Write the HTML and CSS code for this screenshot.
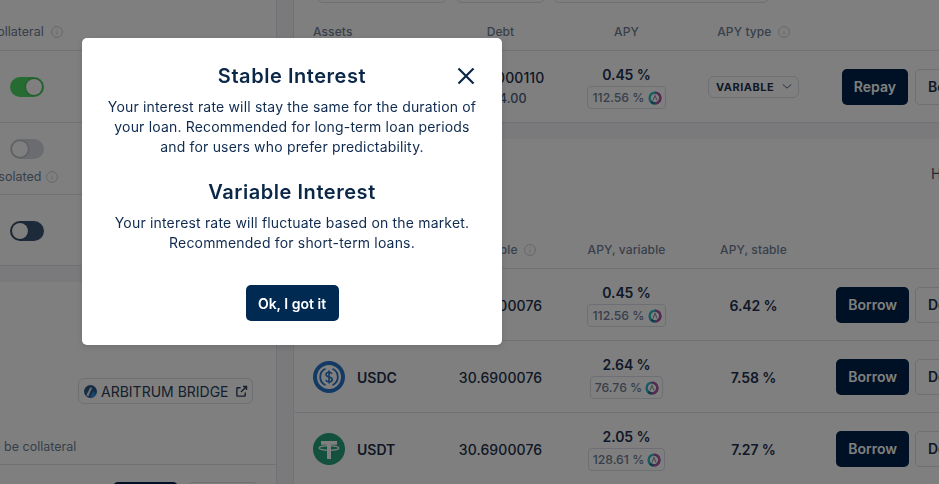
FILE: index.html
```html
<!DOCTYPE html>
<html lang="en">
<head>
    <meta charset="UTF-8">
    <title>Stable Interest</title>
    <link rel="stylesheet" href="styles.css">
</head>
<body>

<svg class="defs" width="0" height="0">
    <symbol id="info" viewBox="0 0 12 12">
        <circle cx="6" cy="6" r="5.4" fill="none" stroke="currentColor"/>
        <path d="M6 5.4v3M6 3.4v.8" fill="none" stroke="currentColor"/>
    </symbol>
    <symbol id="reward" viewBox="0 0 14 14">
        <circle cx="7" cy="7" r="5.4" fill="none" stroke="#2eb8c4" stroke-width="2.4"/>
        <path d="M7 1.6a5.4 5.4 0 0 1 0 10.8" fill="none" stroke="#b6509e" stroke-width="2.4"/>
        <path d="M7 12.4a5.4 5.4 0 0 1-4-1.8" fill="none" stroke="#1f7a9c" stroke-width="2.4"/>
        <path d="M5 9.4 7 4.4l2 5" fill="none" stroke="#8a93a3" stroke-width="1.1"/>
    </symbol>
</svg>

<div class="page">

    <!-- Левая колонка -->
    <div class="side">
        <div class="card side-top">
            <div class="side-head">
                <span>Collateral</span>
                <svg class="info"><use href="#info"/></svg>
            </div>
            <div class="side-row"><span class="toggle toggle-on"></span></div>
            <div class="side-row side-row-iso">
                <span class="toggle toggle-off"></span>
                <div class="side-note">
                    <span>Isolated</span>
                    <svg class="info"><use href="#info"/></svg>
                </div>
            </div>
            <div class="side-row"><span class="toggle toggle-dark"></span></div>
        </div>

        <div class="card side-bottom">
            <a class="bridge">
                <svg class="bridge-logo" viewBox="0 0 14 14">
                    <circle cx="7" cy="7" r="7" fill="#2b5a8a"/>
                    <path d="M2.500 11 6.600 3h2.200L4.600 12.400z" fill="#dfe4ea"/>
                    <path d="M6.500 13 10 6.400l3 3.600-3 3.200z" fill="#2d8ae0"/>
                </svg>
                ARBITRUM BRIDGE
                <svg class="ext" viewBox="0 0 14 14">
                    <path d="M11 8v3.200a.8.8 0 0 1-.8.8H2.800a.8.8 0 0 1-.8-.8V3.800a.8.8 0 0 1 .8-.8H6M8.600 1.600h3.800v3.800M12.200 1.800 6.400 7.600" fill="none" stroke="currentColor" stroke-width="1.500"/>
                </svg>
            </a>
            <div class="side-caption">Can be collateral</div>
            <div class="side-btns">
                <button class="btn btn-dark side-btn">Supply</button>
                <button class="btn btn-line side-btn-line">Details</button>
            </div>
        </div>
    </div>

    <!-- Правая колонка -->
    <div class="main">
        <div class="card positions">
            <div class="pills">
                <span class="pill pill-a"></span>
                <span class="pill pill-b"></span>
                <span class="pill pill-c"></span>
            </div>
            <div class="grid grid-head">
                <span class="col-asset">Assets</span>
                <span>Debt</span>
                <span>APY</span>
                <span>APY type <svg class="info"><use href="#info"/></svg></span>
            </div>
            <div class="grid grid-row">
                <span class="asset"></span>
                <div class="amount">
                    <span>30.69000110</span>
                    <small>$ 124.00</small>
                </div>
                <div class="apy">
                    <strong>0.45 %</strong>
                    <span class="badge">112.56 % <svg class="reward"><use href="#reward"/></svg></span>
                </div>
                <div class="type">
                    <span class="select">VARIABLE
                        <svg class="chevron" viewBox="0 0 12 8"><path d="M1 1.500 6 6l5-4.500" fill="none" stroke="currentColor" stroke-width="1.200"/></svg>
                    </span>
                </div>
                <div class="actions">
                    <button class="btn btn-dark">Repay</button>
                    <button class="btn btn-line">Borrow</button>
                </div>
            </div>
        </div>

        <div class="card borrow">
            <div class="borrow-top">Hide assets with 0 balance</div>
            <div class="grid grid-head">
                <span class="col-asset">Asset</span>
                <span>Available <svg class="info"><use href="#info"/></svg></span>
                <span>APY, variable</span>
                <span>APY, stable</span>
            </div>

            <div class="grid grid-row">
                <span class="asset">DAI</span>
                <div class="amount"><span>30.6900076</span></div>
                <div class="apy">
                    <strong>0.45 %</strong>
                    <span class="badge">112.56 % <svg class="reward"><use href="#reward"/></svg></span>
                </div>
                <strong class="stable">6.42 %</strong>
                <div class="actions">
                    <button class="btn btn-dark">Borrow</button>
                    <button class="btn btn-line">Details</button>
                </div>
            </div>

            <div class="grid grid-row">
                <span class="asset">
                    <svg class="coin" viewBox="0 0 32 32">
                        <circle cx="16" cy="16" r="16" fill="#2775ca"/>
                        <circle cx="16" cy="16" r="12" fill="#fff"/>
                        <path d="M12.500 7.800a9 9 0 0 0 0 16.400M19.500 7.800a9 9 0 0 1 0 16.400" fill="none" stroke="#2775ca" stroke-width="1.800"/>
                        <path d="M19 12.800c-.6-1.200-1.700-1.600-3-1.600-1.700 0-3 .9-3 2.300 0 3.300 6.200 1.600 6.200 4.900 0 1.500-1.400 2.400-3.200 2.400-1.400 0-2.600-.6-3.200-1.800M16 9.400v13.200" fill="none" stroke="#2775ca" stroke-width="1.600"/>
                    </svg>
                    USDC
                </span>
                <div class="amount"><span>30.6900076</span></div>
                <div class="apy">
                    <strong>2.64 %</strong>
                    <span class="badge">76.76 % <svg class="reward"><use href="#reward"/></svg></span>
                </div>
                <strong class="stable">7.58 %</strong>
                <div class="actions">
                    <button class="btn btn-dark">Borrow</button>
                    <button class="btn btn-line">Details</button>
                </div>
            </div>

            <div class="grid grid-row">
                <span class="asset">
                    <svg class="coin" viewBox="0 0 32 32">
                        <circle cx="16" cy="16" r="16" fill="#26a17b"/>
                        <path d="M8 8h16v3.800h-6V26h-4V11.800H8z" fill="#fff"/>
                        <ellipse cx="16" cy="15" rx="10" ry="2.300" fill="none" stroke="#fff" stroke-width="1.200"/>
                    </svg>
                    USDT
                </span>
                <div class="amount"><span>30.6900076</span></div>
                <div class="apy">
                    <strong>2.05 %</strong>
                    <span class="badge">128.61 % <svg class="reward"><use href="#reward"/></svg></span>
                </div>
                <strong class="stable">7.27 %</strong>
                <div class="actions">
                    <button class="btn btn-dark">Borrow</button>
                    <button class="btn btn-line">Details</button>
                </div>
            </div>
        </div>
    </div>
</div>

<!-- Затемнение и модальное окно -->
<div class="overlay"></div>
<div class="modal">
    <button class="modal-close">
        <svg viewBox="0 0 18 18"><path d="M1.500 1.500l15 15M16.500 1.500l-15 15" fill="none" stroke="currentColor" stroke-width="2.200"/></svg>
    </button>
    <h2>Stable Interest</h2>
    <p>Your interest rate will stay the same for the duration of your loan. Recommended for long-term loan periods and for users who prefer predictability.</p>
    <h2 class="second">Variable Interest</h2>
    <p>Your interest rate will fluctuate based on the market. Recommended for short-term loans.</p>
    <button class="modal-ok">Ok, I got it</button>
</div>

</body>
</html>
```

FILE: styles.css
```css
* {
    box-sizing: border-box;
}

html, body {
    margin: 0;
    height: 484px;
    overflow: hidden;
}

body {
    font-family: Inter, "Liberation Sans", sans-serif;
    font-size: 14px;
    color: #2a3f5a;
    background: #f4f5f8;
}

.defs {
    position: absolute;
}

.page {
    display: flex;
    gap: 16px;
    width: 939px;
    height: 484px;
    overflow: hidden;
}

.card {
    background: #fff;
    border: 1px solid #e3e5ea;
    border-width: 0 1px 1px 1px;
}

/* Левая колонка */
.side {
    width: 277px;
    flex: none;
    display: flex;
    flex-direction: column;
    gap: 16px;
}

.side .card {
    border-left: 0;
}

.side-top {
    height: 266px;
}

.side-head {
    height: 51px;
    display: flex;
    align-items: center;
    gap: 4px;
    padding-top: 13px;
    margin-left: -12px;
    color: #6f7f95;
    font-size: 12.500px;
    border-bottom: 1px solid #e3e5ea;
}

.side-row {
    height: 72px;
    padding: 26px 0 0 10px;
    border-bottom: 1px solid #e3e5ea;
}

.side-row:last-child {
    height: 71px;
    border-bottom: 0;
}

.side-row-iso {
    padding-top: 16px;
}

.side-note {
    display: flex;
    align-items: center;
    gap: 2px;
    margin: 10px 0 0 -15px;
    color: #6f7f95;
    font-size: 12.500px;
}

.toggle {
    display: block;
    position: relative;
    width: 34px;
    height: 20px;
    border-radius: 10px;
}

.toggle::after {
    content: "";
    position: absolute;
    top: 2px;
    width: 16px;
    height: 16px;
    border-radius: 50%;
    background: #fff;
    box-shadow: 0 0 2px rgba(0, 0, 0, 0.5);
}

.toggle-on {
    background: #4cd964;
}

.toggle-on::after {
    right: 2px;
}

.toggle-off {
    background: #d6d9e0;
}

.toggle-off::after {
    left: 2px;
}

.toggle-dark {
    background: #3a5474;
}

.toggle-dark::after {
    left: 2px;
}

.side-bottom {
    flex: 1;
    display: flex;
    flex-direction: column;
    padding-top: 96px;
}

.bridge {
    align-self: flex-end;
    display: flex;
    align-items: center;
    gap: 4px;
    width: 175px;
    height: 26px;
    margin-right: 23px;
    padding-left: 5px;
    border: 1px solid #dcdfe5;
    border-radius: 6px;
    color: #2a3f5a;
    font-size: 14px;
}

.bridge-logo {
    width: 13px;
    height: 13px;
}

.ext {
    width: 13px;
    height: 13px;
    margin-left: 2px;
}

.side-caption {
    margin: 35px 0 0 -23px;
    height: 25px;
    color: #6f7f95;
    font-size: 12.500px;
    white-space: nowrap;
}

.side-btns {
    display: flex;
    gap: 10px;
    border-top: 1px solid #e3e5ea;
    padding: 17px 0 0 113px;
}

.side-btn {
    width: 65px;
    flex: none;
}

/* Правая колонка */
.main {
    flex: 1;
    min-width: 0;
    display: flex;
    flex-direction: column;
    gap: 16px;
}

.main .card {
    border-right: 0;
}

.pills {
    display: flex;
    gap: 9px;
    height: 3px;
    padding-left: 23px;
}

.pill {
    display: block;
    height: 8px;
    margin-top: -5px;
    border: 1px solid #dcdfe5;
    border-radius: 0 0 6px 6px;
}

.pill-a { width: 130px; }
.pill-b { width: 89px; }
.pill-c { width: 216px; margin-left: -1px; }

.grid {
    display: grid;
    grid-template-columns: 125px 125px 127px 127px 198px;
    padding-left: 19px;
    text-align: center;
    align-items: center;
}

.grid-head {
    height: 48px;
    padding-top: 10px;
    color: #6f7f95;
    font-size: 12px;
    font-weight: 500;
    letter-spacing: 0.1px;
    border-bottom: 1px solid #e3e5ea;
}

.grid-head span {
    white-space: nowrap;
}

.col-asset {
    text-align: left;
}

.grid-row {
    height: 72px;
    border-bottom: 1px solid #e3e5ea;
}

.positions .grid-row {
    height: 71px;
    border-bottom: 0;
}

.positions .actions {
    gap: 7px;
    margin-left: -1px;
}

.info {
    width: 12px;
    height: 12px;
    color: #c9ced6;
    vertical-align: -2px;
    margin-left: 3px;
}

.asset {
    display: flex;
    align-items: center;
    gap: 12px;
    padding-top: 1px;
    font-weight: 600;
    color: #20304a;
    white-space: nowrap;
}

.coin {
    width: 32px;
    height: 32px;
    flex: none;
}

.amount {
    display: flex;
    flex-direction: column;
    gap: 5px;
    padding-top: 2px;
    color: #20304a;
    font-weight: 500;
    letter-spacing: 0.1px;
}

.amount small {
    font-size: 12.500px;
    color: #4d5f78;
}

.apy {
    display: flex;
    flex-direction: column;
    align-items: center;
    gap: 3px;
    padding-top: 2px;
}

.apy strong, .stable {
    font-weight: 600;
    letter-spacing: -0.1px;
    color: #1e3252;
}

.stable {
    padding-top: 1px;
}

.badge {
    display: flex;
    align-items: center;
    gap: 3px;
    height: 23px;
    padding: 0 3px 0 4px;
    border: 1px solid #dcdfe5;
    border-radius: 4px;
    font-size: 12.250px;
    font-weight: 500;
    color: #6f7f95;
}

.reward {
    width: 14px;
    height: 14px;
    flex: none;
}

.select {
    display: inline-flex;
    align-items: center;
    justify-content: space-between;
    width: 91px;
    height: 22px;
    padding: 0 6px 0 7px;
    border: 1px solid #dcdfe5;
    border-radius: 6px;
    font-size: 11px;
    font-weight: 700;
    letter-spacing: 0.5px;
    color: #1e3252;
}

.chevron {
    width: 10px;
    height: 7px;
    color: #4d5f78;
}

.actions {
    display: flex;
    justify-content: flex-end;
    gap: 6px;
}

.btn {
    height: 36px;
    padding: 0 12px;
    border-radius: 5px;
    font: 600 14px Inter, "Liberation Sans", sans-serif;
    white-space: nowrap;
}

.btn-dark {
    background: #00224a;
    color: #fff;
    border: 0;
}

.btn-line {
    width: 100px;
    flex: none;
    background: #fff;
    color: #1e3252;
    border: 1px solid #dcdfe5;
    text-align: left;
}

.side-btns .side-btn-line {
    width: 70px;
}

.borrow {
    flex: 1;
}

.borrow-top {
    padding: 26px 0 0 637px;
    height: 65px;
    white-space: nowrap;
    color: #3e5570;
    font-size: 14px;
}

.borrow .grid-head {
    height: 65px;
    padding-top: 27px;
}

/* Модальное окно */
.overlay {
    position: fixed;
    inset: 0;
    background: rgba(0, 0, 0, 0.5);
    backdrop-filter: blur(0.4px);
}

.modal {
    position: absolute;
    left: 82px;
    top: 38px;
    width: 420px;
    height: 307px;
    padding: 26px 24px 0;
    background: #fff;
    border-radius: 5px;
    box-shadow: 0 2px 6px rgba(0, 0, 0, 0.12);
    text-align: center;
    color: #0f2b4f;
}

.modal h2 {
    margin: 0 0 9px;
    font-size: 20px;
    line-height: 24px;
    font-weight: 600;
    letter-spacing: 0.55px;
    color: #0b2748;
}

.modal h2.second {
    margin-top: 23px;
}

.modal p {
    margin: 0;
    font-size: 14px;
    line-height: 20px;
    letter-spacing: 0.175px;
}

.modal-close {
    position: absolute;
    top: 29px;
    left: 375px;
    width: 18px;
    height: 18px;
    padding: 0;
    border: 0;
    background: none;
    color: #0b2748;
}

.modal-close svg {
    display: block;
    width: 18px;
    height: 18px;
}

.modal-ok {
    display: block;
    width: 93px;
    height: 36px;
    margin: 32px auto 0;
    padding: 0;
    border: 0;
    border-radius: 5px;
    background: #002a52;
    color: #fff;
    font: 600 14px Inter, "Liberation Sans", sans-serif;
}
```
